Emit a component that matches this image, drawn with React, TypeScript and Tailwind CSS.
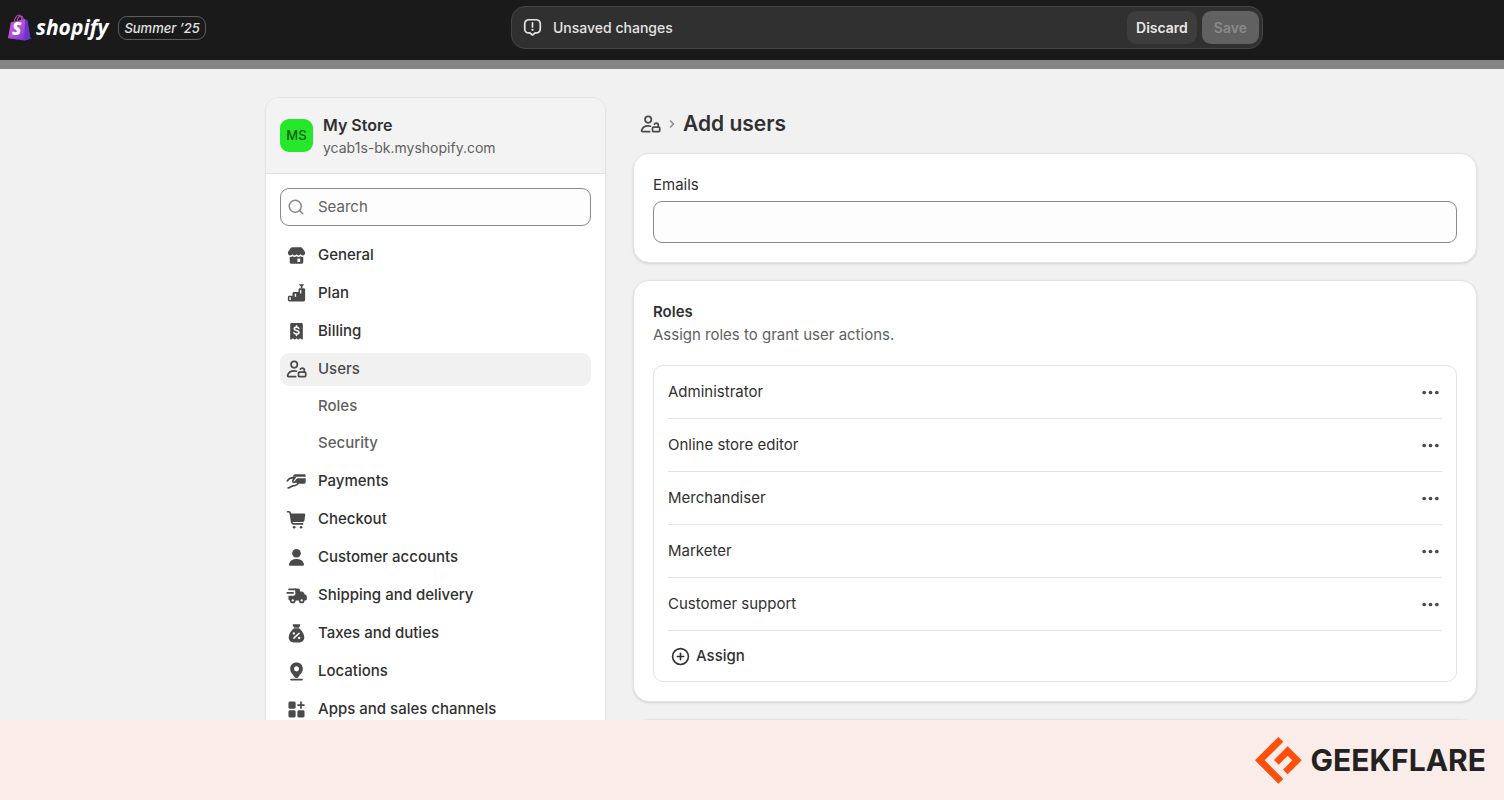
import type { ReactNode } from 'react'
import { ChevronRight, CirclePlus, Search } from 'lucide-react'

type IconProps = { className?: string }

const Svg = ({ className = 'size-[23px]', children }: IconProps & { children: ReactNode }) => (
  <svg viewBox="0 0 20 20" fill="currentColor" className={`shrink-0 ${className}`} aria-hidden="true">
    {children}
  </svg>
)

const StoreIcon = () => (
  <Svg>
    <path d="M6.2 2.8h7.6c.5 0 .9.2 1.2.6l2 3c.3.4.5.9.5 1.4 0 1.3-1 2.2-2.2 2.2-.8 0-1.4-.4-1.8-1-.4.6-1 1-1.75 1S10.4 9.6 10 9c-.4.6-1 1-1.75 1S6.9 9.6 6.5 9c-.4.6-1 1-1.8 1-1.2 0-2.2-.9-2.2-2.2 0-.5.2-1 .5-1.4l2-3c.3-.4.7-.6 1.2-.6Z" />
    <path
      fillRule="evenodd"
      d="M4.1 11.2c1 .1 1.7 0 2.4-.5.5.3 1.1.5 1.75.5s1.25-.2 1.75-.5c.5.3 1.1.5 1.75.5s1.25-.2 1.75-.5c.7.5 1.4.6 2.4.5v4.4c0 .9-.7 1.6-1.6 1.6H5.7c-.9 0-1.6-.7-1.6-1.6v-4.4Zm6.7 1.5v2.9h2.4v-2.9h-2.4Z"
    />
  </Svg>
)

const PlanIcon = () => (
  <Svg>
    <path d="M12.6 1.9h3.3c.5 0 .6.5.3.8l-1 .9v1.9h-1.5V3.6l-1.3-1c-.3-.3-.2-.7.2-.7Z" />
    <path
      fillRule="evenodd"
      d="M13 5.5h3.25c.7 0 1.25.55 1.25 1.25v9c0 .7-.55 1.25-1.25 1.25H3.75c-.7 0-1.25-.55-1.25-1.25v-2.5c0-.7.55-1.25 1.25-1.25H6.5V10c0-.7.55-1.25 1.25-1.25h4v-2c0-.7.55-1.25 1.25-1.25Zm.1 1.4v3h1.1v-3h-1.1Zm-4.6 3.25v2.6h1.2v-2.6H8.5Zm-4.7 3.2v2.3H5v-2.3H3.8Z"
    />
  </Svg>
)

const BillingIcon = () => (
  <Svg>
    <path d="M5.75 2.5h8.5c.7 0 1.25.55 1.25 1.25V16.5c0 .6-.6.8-1 .5l-1.4-1.1-1.6 1.3-1.5-1.3-1.5 1.3-1.6-1.3L5.5 17c-.4.3-1 .1-1-.5V3.75c0-.7.55-1.25 1.25-1.25Z" />
    <path
      d="M12 7.3c-.3-.7-1-1.05-2-1.05-1.2 0-2 .6-2 1.45 0 2.15 4.15.85 4.15 3.05 0 .9-.9 1.5-2.15 1.5-1.1 0-1.9-.4-2.2-1.15M10 5v1.25m0 6v1.25"
      fill="none"
      stroke="white"
      strokeWidth="1.4"
      strokeLinecap="round"
    />
  </Svg>
)

const UsersIcon = ({ className }: IconProps) => (
  <Svg className={className}>
    <g fill="none" stroke="currentColor" strokeWidth="1.5" strokeLinecap="round" strokeLinejoin="round">
      <circle cx="8" cy="5.75" r="2.75" />
      <path d="M9.25 16.25H3.1c-.6 0-1-.5-.85-1.1.6-2.2 2.7-3.9 5.75-3.9.7 0 1.3.1 1.9.25" />
      <rect x="11.75" y="12.25" width="6.25" height="4" rx=".75" />
      <path d="M16.75 12.25V10.5c0-1-.75-1.75-1.75-1.75-.7 0-1.3.35-1.6.95" />
    </g>
  </Svg>
)

const PaymentsIcon = () => (
  <Svg>
    <path d="M9 3.75h7.75c.7 0 1.25.5 1.25 1.25v.9H6.7c.4-1.3 1.2-2.15 2.3-2.15Z" />
    <path d="M10.5 7.25H18v3.25c0 .8-.6 1.4-1.4 1.4h-3.9L8.3 9.7l2.2-2.45Z" />
    <path
      d="M2 9.5c1.2-2.1 2.7-2.8 5.25-2.9h1.5L7 9c-.6.9 0 1.9 1.2 1.6l4.2-.8c-.9 2.3-2.9 4-5.4 4-1.7 0-2.2 1.7-4.25 1.7"
      fill="none"
      stroke="currentColor"
      strokeWidth="1.5"
      strokeLinecap="round"
      strokeLinejoin="round"
    />
  </Svg>
)

const CartIcon = () => (
  <Svg>
    <path
      d="M2.25 3.25h1c.7 0 1.25.5 1.35 1.15L5.9 12.5c.1.7.7 1.25 1.4 1.25h8"
      fill="none"
      stroke="currentColor"
      strokeWidth="1.5"
      strokeLinecap="round"
    />
    <path d="M4.8 4.75h11.7c.75 0 1.2.5 1.1 1.2l-.7 5c-.1.75-.7 1.3-1.5 1.3H6L4.8 4.75Z" />
    <circle cx="8" cy="16.75" r="1.15" />
    <circle cx="14" cy="16.75" r="1.15" />
  </Svg>
)

const PersonIcon = () => (
  <Svg>
    <circle cx="10" cy="6.25" r="3.75" />
    <path d="M3.5 15.6c.7-2.7 3-4.35 6.5-4.35s5.8 1.65 6.5 4.35c.2.9-.4 1.65-1.3 1.65H4.8c-.9 0-1.5-.75-1.3-1.65Z" />
  </Svg>
)

const TruckIcon = () => (
  <Svg>
    <path d="M3.5 4.75H9M2 7.75h5" fill="none" stroke="currentColor" strokeWidth="1.5" strokeLinecap="round" />
    <path d="M8.5 4h3c.8 0 1.5.7 1.5 1.5v1h1.5c.7 0 1.3.3 1.7.9l1 1.7 1 .5c.5.3.8.8.8 1.4v2c0 .7-.6 1.25-1.25 1.25H4.25c-.7 0-1.25-.55-1.25-1.25v-2.75h4.25c1 0 1.75-.8 1.75-1.75V6.25L8.5 4Z" />
    <circle cx="6.75" cy="14.25" r="1.75" fill="white" stroke="currentColor" strokeWidth="1.5" />
    <circle cx="14.5" cy="14.25" r="1.75" fill="white" stroke="currentColor" strokeWidth="1.5" />
  </Svg>
)

const TaxIcon = () => (
  <Svg>
    <path d="M7.4 2h5.2c.7 0 1 .6.6 1.15L12 5H8L6.8 3.15C6.4 2.6 6.7 2 7.4 2Z" />
    <path d="M8 5.5h4c2.7 1.8 4.75 5.2 4.75 8 0 2.6-1.7 4.25-4.25 4.25h-5c-2.55 0-4.25-1.65-4.25-4.25 0-2.8 2.05-6.2 4.75-8Z" />
    <path d="m7.75 14 4.5-4.25" stroke="white" strokeWidth="1.3" strokeLinecap="round" />
    <circle cx="7.7" cy="10" r="1" fill="white" />
    <circle cx="12.3" cy="13.9" r="1" fill="white" />
  </Svg>
)

const PinIcon = () => (
  <Svg>
    <path
      fillRule="evenodd"
      d="M10 2.25c3.2 0 5.5 2.3 5.5 5.35 0 3.2-2.3 4.7-3.6 6.9-.9 1.5-2.9 1.5-3.8 0-1.3-2.2-3.6-3.7-3.6-6.9 0-3.05 2.3-5.35 5.5-5.35Zm0 3.25a2.2 2.2 0 1 0 0 4.4 2.2 2.2 0 0 0 0-4.4Z"
    />
    <path d="M5.25 17h9.5" stroke="currentColor" strokeWidth="1.5" strokeLinecap="round" />
  </Svg>
)

const AppsIcon = () => (
  <Svg>
    <rect x="3" y="3" width="6.25" height="6.25" rx="1.25" />
    <rect x="3" y="10.75" width="6.25" height="6.25" rx="1.25" />
    <rect x="10.75" y="10.75" width="6.25" height="6.25" rx="1.25" />
    <path d="M13.9 3.5v5.2M11.3 6.1h5.2" stroke="currentColor" strokeWidth="1.5" strokeLinecap="round" />
  </Svg>
)

const AlertIcon = () => (
  <Svg>
    <path
      d="M6.75 3.25h6.5a3.5 3.5 0 0 1 3.5 3.5v4.5a3.5 3.5 0 0 1-3.5 3.5h-1L10 16.5l-2.25-1.75h-1a3.5 3.5 0 0 1-3.5-3.5v-4.5a3.5 3.5 0 0 1 3.5-3.5Z"
      fill="none"
      stroke="currentColor"
      strokeWidth="1.5"
      strokeLinejoin="round"
    />
    <path d="M10 6v3.5" stroke="currentColor" strokeWidth="1.5" strokeLinecap="round" />
    <circle cx="10" cy="12" r="1" />
  </Svg>
)

const DotsIcon = () => (
  <Svg>
    <circle cx="4.5" cy="10" r="1.6" />
    <circle cx="10" cy="10" r="1.6" />
    <circle cx="15.5" cy="10" r="1.6" />
  </Svg>
)

const ShopifyBag = () => (
  <svg viewBox="0 0 23 27" className="h-[27px] w-[23px] shrink-0" aria-hidden="true">
    <defs>
      <linearGradient id="bag" x1="0" y1="0" x2="1" y2="1">
        <stop offset="0" stopColor="#d957c9" />
        <stop offset=".5" stopColor="#b04fd8" />
        <stop offset="1" stopColor="#5b2bd0" />
      </linearGradient>
    </defs>
    <path
      d="M6 8.5c.6-4.5 3-7.5 5-7.5 1.6 0 2.5 2 2.6 5M9 7.5C9.6 4 11.5 2 13 2.2c1.3.1 2 1.8 2.2 3.5"
      fill="none"
      stroke="#a34bb0"
      strokeWidth="1.2"
    />
    <path d="M2.8 8.6 17 5l5.6 19.8-6.1 1.7L0 24.2 2.8 8.6Z" fill="url(#bag)" />
    <path d="m17 5 2.6 1.4 3 18.4-6.1 1.7L17 5Z" fill="#6a35c9" />
    <text x="4" y="21" fontSize="17" fontWeight="800" fontStyle="italic" fill="white" fontFamily="Open Sans, sans-serif">
      S
    </text>
  </svg>
)

const GeekflareMark = () => (
  <svg viewBox="0 0 141 141" className="size-[47px] shrink-0" fill="#ff4f0a" aria-hidden="true">
    <path d="M70 0 85 14 29 70l56 56-15 14L0 70 70 0Z" />
    <path d="m98 28 42 42-42 42-14-14 28-28-14-14-27 27-14-14 41-41Z" />
  </svg>
)

const navItems = [
  { label: 'General', icon: <StoreIcon /> },
  { label: 'Plan', icon: <PlanIcon /> },
  { label: 'Billing', icon: <BillingIcon /> },
  { label: 'Users', icon: <UsersIcon />, active: true, children: ['Roles', 'Security'] },
  { label: 'Payments', icon: <PaymentsIcon /> },
  { label: 'Checkout', icon: <CartIcon /> },
  { label: 'Customer accounts', icon: <PersonIcon /> },
  { label: 'Shipping and delivery', icon: <TruckIcon /> },
  { label: 'Taxes and duties', icon: <TaxIcon /> },
  { label: 'Locations', icon: <PinIcon /> },
  { label: 'Apps and sales channels', icon: <AppsIcon /> },
]

const roles = ['Administrator', 'Online store editor', 'Merchandiser', 'Marketer', 'Customer support']

const TopBar = () => (
  <header className="grid h-[69px] shrink-0 grid-cols-[511px_minmax(0,752px)_1fr] items-start border-b-[9px] border-[#858585] bg-[#1a1a1a]">
    <div className="flex h-[55px] items-center pl-2">
      <ShopifyBag />
      <span className="ml-[5px] pb-[2px] font-['Open_Sans',sans-serif] text-[21px] leading-7 font-bold text-white italic">
        shopify
      </span>
      <span className="ml-[10px] rounded-[9px] border border-[#5c5c5c] px-[5px] text-[13px] leading-[22px] font-medium text-[#e3e3e3] italic">
        Summer ’25
      </span>
    </div>
    <div className="mt-[6px] flex h-[43px] items-center rounded-[14px] border border-[#454545] bg-[#303030] pr-[3px] pl-[9px] text-sm">
      <span className="text-[#e3e3e3]">
        <AlertIcon />
      </span>
      <span className="ml-[9px] font-medium text-[#e3e3e3]">Unsaved changes</span>
      <button type="button" className="ml-auto h-[33px] rounded-[9px] bg-[#3d3d3d] px-[9px] font-semibold text-[#e8e8e8]">
        Discard
      </button>
      <button
        type="button"
        disabled
        className="ml-[5px] h-[33px] rounded-[9px] bg-[#616161] px-3 font-semibold text-[#8a8a8a]"
      >
        Save
      </button>
    </div>
  </header>
)

const Sidebar = () => (
  <aside className="w-[341px] shrink-0 self-start rounded-[14px] border border-[#e3e3e3] bg-white pb-4 shadow-xs">
    <div className="flex h-[76px] items-center gap-[10px] rounded-t-[13px] border-b border-[#e3e3e3] bg-[#f3f3f3] px-[14px]">
      <div className="flex size-[33px] items-center justify-center rounded-[9px] bg-[#25e82b] text-[13px] font-medium text-[#0a5c10]">
        MS
      </div>
      <div>
        <p className="text-base leading-6 font-semibold text-[#303030]">My Store</p>
        <p className="text-sm leading-[22px] text-[#616161]">ycab1s-bk.myshopify.com</p>
      </div>
    </div>
    <div className="px-[14px] pt-[14px]">
      <label className="flex h-[38px] items-center gap-[10px] rounded-[9px] border border-[#8a8a8a] bg-[#fdfdfd] pl-[6px]">
        <Search className="size-[18px] shrink-0 text-[#8a8a8a]" strokeWidth={2} />
        <input
          type="search"
          placeholder="Search"
          aria-label="Search settings"
          className="w-full min-w-0 bg-transparent pl-[3px] text-[15px] text-[#303030] outline-none placeholder:text-[#616161]"
        />
      </label>
      <ul className="mt-[13px] flex flex-col gap-[5px] text-[15px] font-medium">
        {navItems.map((item) => (
          <li key={item.label}>
            <a
              href="#"
              className={`flex h-[33px] items-center gap-[10px] rounded-[9px] pl-[5px] ${
                item.active ? 'bg-[#f1f1f1] text-[#4a4a4a]' : 'text-[#303030]'
              }`}
            >
              <span className="text-[#4a4a4a]">{item.icon}</span>
              {item.label}
            </a>
            {item.children && (
              <ul className="mt-1 flex flex-col gap-1">
                {item.children.map((child) => (
                  <li key={child}>
                    <a href="#" className="flex h-[33px] items-center pl-[38px] text-[#616161]">
                      {child}
                    </a>
                  </li>
                ))}
              </ul>
            )}
          </li>
        ))}
      </ul>
    </div>
  </aside>
)

const cardClass = 'rounded-[16px] border border-[#e3e3e3] bg-white px-[19px] shadow-sm'

const AddUsers = () => (
  <section className="min-w-0 flex-1 text-[15px] text-[#303030]">
    <div className="flex h-14 items-center px-[6px] pb-[2px]">
      <span className="text-[#4a4a4a]">
        <UsersIcon />
      </span>
      <ChevronRight className="mr-[5px] ml-1 size-3 text-[#8a8a8a]" strokeWidth={3} />
      <h1 className="text-[21px] leading-7 font-semibold">Add users</h1>
    </div>

    <div className={`${cardClass} pt-5 pb-[19px]`}>
      <label htmlFor="emails" className="block leading-[22px]">
        Emails
      </label>
      <input
        id="emails"
        type="email"
        className="mt-[5px] block h-[42px] w-full rounded-[9px] border border-[#8a8a8a] bg-[#fdfdfd] px-3"
      />
    </div>

    <div className={`${cardClass} mt-[17px] pt-5 pb-[19px]`}>
      <h2 className="leading-[22px] font-semibold">Roles</h2>
      <p className="mt-px leading-[22px] text-[#616161]">Assign roles to grant user actions.</p>
      <ul className="mt-[19px] rounded-[10px] border border-[#e3e3e3] px-[14px]">
        {roles.map((role) => (
          <li key={role} className="flex h-[53px] items-center justify-between border-b border-[#e3e3e3]">
            {role}
            <button type="button" aria-label={`Actions for ${role}`} className="text-[#4a4a4a]">
              <DotsIcon />
            </button>
          </li>
        ))}
        <li className="flex h-[50px] items-center">
          <button type="button" className="flex items-center gap-[6px] pl-[3px] font-medium">
            <CirclePlus className="size-[19px] text-[#303030]" strokeWidth={2} />
            Assign
          </button>
        </li>
      </ul>
    </div>

    <div className={`${cardClass} mt-[17px] h-10`} />
  </section>
)

const App = () => (
  <div className="flex h-screen flex-col overflow-hidden bg-[#f1f1f1] font-['Inter',sans-serif]">
    <TopBar />
    <main className="flex min-h-0 flex-1 items-start gap-[27px] overflow-hidden pt-7 pr-[27px] pl-[265px]">
      <Sidebar />
      <AddUsers />
    </main>
    <footer className="flex h-20 shrink-0 items-center justify-end gap-[9px] bg-[#faece9] pr-[18px]">
      <GeekflareMark />
      <span className="text-[30px] leading-10 font-bold text-[#222222]">GEEKFLARE</span>
    </footer>
  </div>
)

export default App
